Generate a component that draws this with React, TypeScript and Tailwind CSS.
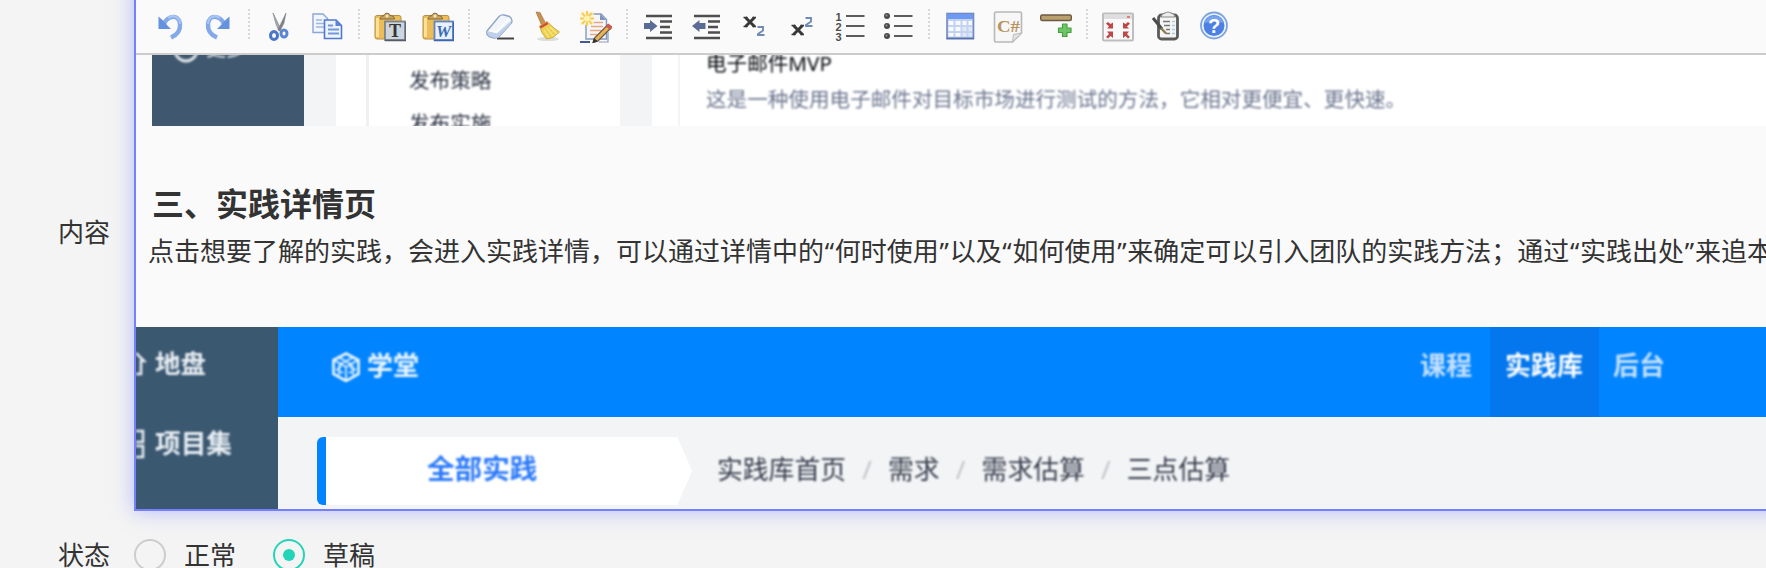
import React from 'react';

const Undo = () => (
  <>
    <path d="M10 13C14 4 25 3 26 13C26.500 19 23 24 17 26.500" fill="none" stroke="#84a9e8" strokeWidth="4.400" />
    <path d="M14 7C19 3 26 6 26 13" fill="none" stroke="#a9c6f5" strokeWidth="2" />
    <path d="M4.500 5.500V18H17L12.500 13.500L8.500 9Z" fill="#6592de" />
  </>
);

const Cut = () => (
  <>
    <path d="M9 2L17 18.500L15 20L12 13Z" fill="#a9adb3" stroke="#898d93" strokeWidth="0.800" />
    <path d="M22 2L14 18.500L16 20L20 12Z" fill="#7e8389" stroke="#777" strokeWidth="0.500" />
    <ellipse cx="10" cy="24.500" rx="3.500" ry="4" fill="none" stroke="#4a76c9" strokeWidth="3" />
    <ellipse cx="20" cy="22.500" rx="3" ry="3.500" fill="none" stroke="#5a86d6" strokeWidth="3" />
  </>
);

const Copy = () => (
  <>
    <path d="M1 3H11L15.500 7.500V21.500H1Z" fill="#f1f6ff" stroke="#8aa5d8" strokeWidth="1.400" />
    <path d="M4 9H10M4 12.500H12M4 16H12" stroke="#9db6e2" strokeWidth="1.500" />
    <path d="M12.500 9H24L29.500 14.500V27.500H12.500Z" fill="#edf4ff" stroke="#5078cc" strokeWidth="1.600" />
    <path d="M23.500 9V15H29.500Z" fill="#5d84d8" />
    <path d="M16 14.500H21M16 18.500H27M16 22.500H27" stroke="#7698da" strokeWidth="1.800" />
  </>
);

const Board = () => (
  <>
    <rect x="1" y="4.500" width="26" height="23.500" rx="2" fill="#edbd58" stroke="#b98e45" />
    <path d="M3.500 7V26" stroke="#ffe19a" strokeWidth="3" />
    <path d="M6 8C6 5 9 5 10 4.500C10 1.500 16 1.500 16 4.500C18 5 20.500 5 20.500 8Z" fill="#c9a65e" stroke="#806a42" />
    <circle cx="13" cy="5" r="1.500" fill="#f5e7c2" />
  </>
);

const PasteText = () => (
  <>
    <Board />
    <rect x="11" y="10.500" width="20" height="18.500" fill="#cdd5df" stroke="#7b838e" strokeWidth="1.800" />
    <path d="M11 29.500H32V11" fill="none" stroke="#565c65" strokeWidth="1.500" />
    <text x="21" y="26" textAnchor="middle" fontFamily="Liberation Serif" fontWeight="bold" fontSize="18" fill="#353535">T</text>
  </>
);

const PasteWord = () => (
  <>
    <Board />
    <rect x="12.500" y="10.500" width="18.500" height="18.500" fill="#e8f1fc" stroke="#5f86c7" strokeWidth="1.800" />
    <path d="M12 29.500H31.500V11" fill="none" stroke="#3d67ae" strokeWidth="1.500" />
    <text x="21.500" y="25.500" textAnchor="middle" fontFamily="Liberation Serif" fontWeight="bold" fontStyle="italic" fontSize="17" fill="#3c6cb8">W</text>
  </>
);

const Eraser = () => (
  <>
    <path d="M13 27.500H30" stroke="#444" strokeWidth="2" />
    <path d="M3 20L15 5.500Q17 3.500 20 4L25.500 5.500Q29 8 27.500 12L15 25.500Q13 27.500 10 27L5 25.500Q2 23.500 3 20Z" fill="#f1f5fb" stroke="#8fa4c6" strokeWidth="1.400" />
    <path d="M3.500 20L13 22.500L27.500 9.500L27 13L14.500 26Q12 27.500 9 26.500L5 25Q3 23 3.500 20Z" fill="#bed0ea" />
    <path d="M5 19.500L12.500 21L25 8" fill="none" stroke="#fff" strokeWidth="1.500" />
  </>
);

const Broom = () => (
  <>
    <ellipse cx="16" cy="28" rx="11" ry="2" fill="#ddd" />
    <path d="M4 1L8 1.500L13.500 12L9.500 14Z" fill="#c79150" stroke="#9d6a35" strokeWidth="0.600" />
    <path d="M7.500 15L15 10.500L22 17L27.500 21L21 26.500L14.500 28Q9 22 7.500 15Z" fill="#ecd04f" stroke="#c6a536" strokeWidth="0.800" />
    <path d="M7.500 15.500L15 11L16.500 13L9 17.500Z" fill="#cf4e3e" />
    <path d="M12 19L17 26.500M15 17L21 25M18 16L24.500 22.500" stroke="#f8e88b" strokeWidth="1.200" />
  </>
);

const Template = () => (
  <>
    <path d="M9 3H21L26.500 8.500V28H6V14Z" fill="#f4f6fa" stroke="#8599bc" strokeWidth="1.400" />
    <path d="M20 3V9H26Z" fill="#7d95c1" />
    <path d="M13 11.500H23M11 15.500H23M10 19.500H21M10 23.500H17" stroke="#e6a77f" strokeWidth="1.500" />
    <path d="M0 0H14V14H0Z" fill="#fdf3cf" opacity="0.700" />
    <path d="M7 0V15M0 7.500H14M2 2L12 13M12 2L2 13" stroke="#f5cc55" strokeWidth="2" />
    <circle cx="7" cy="7.500" r="3" fill="#fff2ad" />
    <path d="M27.500 14L31 17L18 30L13 31.500L14.500 27Z" fill="#e4b257" stroke="#695541" strokeWidth="1.200" />
    <path d="M27 14L31.500 17.500" stroke="#cf5953" strokeWidth="4" />
    <path d="M14 27L18 30.500L12.500 32Z" fill="#333" />
    <path d="M0 31H10" stroke="#405b91" strokeWidth="2" />
    <path d="M28 21V31H19" fill="none" stroke="#8599bc" strokeWidth="1.200" />
  </>
);

const IndentLines = () => (
  <path d="M4 5H30M18 10.500H30M18 16H28M18 21.500H30M4 27H30" stroke="#4e4e4e" strokeWidth="2.600" />
);

const Indent = () => (
  <>
    <IndentLines />
    <path d="M2 12H8V9L15.500 15L8 21V18H2Z" fill="#5a6c96" />
  </>
);

const Outdent = () => (
  <>
    <IndentLines />
    <path d="M15.500 12H9.500V9L2 15L9.500 21V18H15.500Z" fill="#5a6c96" />
  </>
);

const Sub = () => (
  <>
    <path d="M7.500 6.500L16.500 15.500M16.500 6.500L7.500 15.500" stroke="#383838" strokeWidth="3" />
    <path d="M5.500 6.500H9.500M14.500 6.500H18M5.500 15.500H9.500M14.500 15.500H18" stroke="#383838" strokeWidth="1.500" />
    <path d="M19.500 16H25V19.500L20 23V24H26.500" fill="none" stroke="#718bb8" strokeWidth="1.900" />
  </>
);

const Sup = () => (
  <>
    <path d="M7.500 14.500L16.500 23.500M16.500 14.500L7.500 23.500" stroke="#383838" strokeWidth="3" />
    <path d="M5.500 14.500H9.500M14.500 14.500H18M5.500 23.500H9.500M14.500 23.500H18" stroke="#383838" strokeWidth="1.500" />
    <path d="M19.500 7H25V10.500L20 14V15H26.500" fill="none" stroke="#718bb8" strokeWidth="1.900" />
  </>
);

const OrderedList = () => (
  <>
    <path d="M12 5H30.500M12 15H30.500M12 25H30.500" stroke="#5c5c5c" strokeWidth="2.200" />
    <g fontFamily="Liberation Sans" fontWeight="bold" fontSize="11" fill="#4c4c4c">
      <text x="1.500" y="10">1</text>
      <text x="1.500" y="20">2</text>
      <text x="1.500" y="30">3</text>
    </g>
  </>
);

const BulletList = () => (
  <>
    <path d="M12 5H30.500M12 15H30.500M12 25H30.500" stroke="#5c5c5c" strokeWidth="2.200" />
    {[5, 15, 25].map((y) => (
      <g key={y}>
        <circle cx="5" cy={y} r="3" fill="#4a4a4a" />
        <circle cx="4.500" cy={y - 0.5} r="1" fill="#999" />
      </g>
    ))}
  </>
);

const Table = () => (
  <>
    <rect x="3" y="2.500" width="26.500" height="25" fill="#c3d2ef" stroke="#7189c2" strokeWidth="1.600" />
    <path d="M3 3H29V8H3Z" fill="#6f9af3" />
    <g fill="#f7faff">
      <path d="M4.500 10H9.500V14H4.500ZM11.500 10H16.500V14H11.500ZM18.500 10H22.500V14H18.500ZM24.500 10H28V14H24.500Z" />
      <path d="M4.500 16H9.500V20H4.500ZM11.500 16H16.500V20H11.500Z" />
      <path d="M4.500 22H9.500V25.500H4.500ZM11.500 22H16.500V25.500H11.500Z" />
    </g>
    <path d="M18.500 16H22.500V20H18.500ZM24.500 16H28V20H24.500ZM18.500 22H22.500V25.500H18.500ZM24.500 22H28V25.500H24.500Z" fill="#dfe8fa" />
    <path d="M2.500 27.500H30" stroke="#5671ae" strokeWidth="1.600" />
  </>
);

const Code = () => (
  <>
    <path d="M4 1H28Q29.500 1 29.500 3V22L20.500 31H4Q2.500 31 2.500 29V3Q2.500 1 4 1Z" fill="#f7f7f7" stroke="#b8b8b8" strokeWidth="1.600" />
    <path d="M20.500 31L21.500 23.500L29.500 22Z" fill="#e4e4e4" stroke="#bbb" />
    <text x="5" y="21" textLength="23" lengthAdjust="spacingAndGlyphs" fontFamily="Liberation Serif" fontWeight="bold" fontSize="17" fill="#b8935d">C#</text>
  </>
);

const Rule = () => (
  <>
    <rect x="0.700" y="4" width="30.600" height="5.500" rx="1.500" fill="#baa06c" stroke="#6b5a43" strokeWidth="1.400" />
    <path d="M22.500 13H27V17H31V21.500H27V25.500H22.500V21.500H18.500V17H22.500Z" fill="#6cc665" stroke="#45a23f" strokeWidth="1.200" strokeLinejoin="round" />
  </>
);

const Fullscreen = () => (
  <>
    <rect x="1" y="2.500" width="30" height="27" rx="1" fill="#fafafa" stroke="#bebebe" strokeWidth="2" />
    <path d="M2 4H30V8H2Z" fill="#dedede" />
    <path d="M25 6H28" stroke="#df8080" strokeWidth="2" />
    <g fill="#c04747">
      <path d="M4 12.500L6 11L8.500 13L11 11.500V17.500H5L7 15.500Z" />
      <path d="M28 12.500L26 11L23.500 13L21 11.500V17.500H27L25 15.500Z" />
      <path d="M4 26L6 27.500L8.500 25L11 27V20.500H5L7 23Z" />
      <path d="M28 26L26 27.500L23.500 25L21 27V20.500H27L25 23Z" />
    </g>
  </>
);

const Clipboard = () => (
  <>
    <rect x="8.500" y="4" width="19" height="24" rx="3" fill="#f5f5f3" stroke="#5b5b5b" strokeWidth="2.800" />
    <path d="M11 6Q11 3 14 2.500Q18 -0.500 22 2.500Q25 3 25 6Z" fill="#ececec" stroke="#888" strokeWidth="1.200" />
    <path d="M13 10.500H20M14 14.500H20M16 18.500H20M16 22.500H20" stroke="#777" strokeWidth="1.500" />
    <path d="M22 10.500H25M22 14.500H25M22 18.500H25M22 22.500H25" stroke="#a8cde5" strokeWidth="1.500" />
    <path d="M3 7L12 18" fill="none" stroke="#4b4b4b" strokeWidth="3" />
    <path d="M11 17L16 22.500" stroke="#8c7c50" strokeWidth="2.400" />
  </>
);

const Help = () => (
  <>
    <circle cx="16" cy="14.500" r="13" fill="#eef4ff" stroke="#7fa5de" strokeWidth="1.800" />
    <circle cx="16" cy="14.500" r="10.500" fill="#4c80e4" />
    <path d="M6 12A10.500 10.500 0 0 1 26 12Q16 9 6 12Z" fill="#77a2f0" />
    <text x="16" y="21.500" textAnchor="middle" fontFamily="Liberation Sans" fontWeight="bold" fontSize="20" fill="#fff">?</text>
  </>
);

const Redo = () => (
  <g transform="matrix(-1 0 0 1 32 0)">
    <Undo />
  </g>
);

const groups: React.FC[][] = [
  [Undo, Redo],
  [Cut, Copy],
  [PasteText, PasteWord],
  [Eraser, Broom, Template],
  [Indent, Outdent, Sub, Sup, OrderedList, BulletList],
  [Table, Code, Rule],
  [Fullscreen, Clipboard, Help],
];

const Toolbar = () => (
  <div className="h-[75px] shrink-0 border-b-2 border-[#cccccc] bg-[#fafafa] pt-[31px] pl-2.5 flex items-start">
    {groups.map((icons, i) => (
      <div key={i} className="flex items-start">
        {i > 0 && (
          <div className="-mt-0.5 mx-1.5 h-8 w-0.5 bg-[repeating-linear-gradient(to_bottom,#d9d9d9_0_2px,transparent_2px_4px)]" />
        )}
        {icons.map((Icon, j) => (
          <button key={j} type="button" className="w-12 h-8 flex justify-center">
            <svg width="32" height="32" viewBox="0 0 32 32">
              <Icon />
            </svg>
          </button>
        ))}
      </div>
    ))}
  </div>
);

const PracticeList = () => (
  <div className="ml-4 h-[71px] shrink-0 flex overflow-hidden bg-white text-[20.6px] leading-[44px]">
    <div className="w-[152px] bg-[#40586f] text-[#eef2f5] pl-[21px] flex gap-[7px]">
      <svg className="-mt-[18px] blur-[0.8px]" width="26" height="26" viewBox="0 0 26 26">
        <circle cx="13" cy="13" r="11" fill="none" stroke="#e8edf1" strokeWidth="2.800" />
      </svg>
      <span className="-mt-[26px] h-10 text-[20px] leading-[40px] blur-[0.8px]">更多</span>
    </div>
    <div className="w-8 bg-[#f3f4f6]" />
    <div className="w-[30px] bg-white" />
    <div className="w-[3px] bg-[#f0f0f1]" />
    <div className="w-[251px] pl-10 pt-[3px] text-[#2c3343] blur-[0.8px]">
      <div>发布策略</div>
      <div className="-mt-px">发布实施</div>
    </div>
    <div className="w-8 bg-[#f3f4f6]" />
    <div className="w-[26px]" />
    <div className="w-0.5 bg-[#f4f4f5]" />
    <div className="flex-1 pl-[26px]">
      <div className="-mt-[14px] text-[#05070d] blur-[0.8px]">电子邮件MVP</div>
      <div className="-mt-2 text-[#6c768f] whitespace-nowrap blur-[0.8px]">
        这是一种使用电子邮件对目标市场进行测试的方法，它相对更便宜、更快速。
      </div>
    </div>
  </div>
);

const crumbs = ['实践库首页', '需求', '需求估算', '三点估算'];

const PracticeDetail = () => (
  <div className="h-[182px] shrink-0 flex overflow-hidden text-[26px] leading-[40px]">
    <div className="w-[142px] bg-[#3b5871] text-[#e9eff4] font-bold">
      <div className="mt-4 flex h-10">
        <svg className="blur-[0.8px]" width="19" height="40" viewBox="0 0 19 40">
          <path d="M0 10L8 18H5V31H0" fill="none" stroke="#e6ecf1" strokeWidth="2.600" />
        </svg>
        <span className="text-[25.500px] blur-[0.8px]">地盘</span>
      </div>
      <div className="mt-[41px] flex h-10">
        <svg className="blur-[0.8px]" width="19" height="40" viewBox="0 0 19 40">
          <path d="M0 7H7V18H0M0 22H7V33H0" fill="none" stroke="#e6ecf1" strokeWidth="2.600" />
        </svg>
        <span className="text-[25.700px] blur-[0.8px]">项目集</span>
      </div>
    </div>
    <div className="flex-1 bg-[#f3f4f6]">
      <div className="h-[90px] bg-[#0084ff] flex pt-[18px] font-bold text-[#eef6ff]">
        <svg className="ml-[53px] mt-[7px] mr-[6px] shrink-0 blur-[0.8px]" width="30" height="30" viewBox="0 0 30 30" fill="none" stroke="#f2f8ff" strokeWidth="2.600">
          <path d="M15 1.500L27.500 8V22L15 29L2.500 22V8Z" />
          <path d="M3 8L15 15L27 8M15 15V28M8 5.500L20 12V17M22 5.500L9 12V17M8 13.500V23M22 13.500V23M5 17L12 21M25 17L18 21" strokeWidth="1.600" />
        </svg>
        <span className="blur-[0.8px]">学堂</span>
        <div className="ml-[985px] -mt-[18px] h-[90px] flex shrink-0 text-[#c4e0ff]">
          <span className="w-[86px] pt-[18px] pl-[16px]"><span className="block blur-[0.8px]">课程</span></span>
          <span className="w-[109px] pt-[18px] pl-[15px] bg-[#0477ee] text-white"><span className="block blur-[0.8px]">实践库</span></span>
          <span className="pt-[18px] pl-[14px]"><span className="block blur-[0.8px]">后台</span></span>
        </div>
      </div>
      <div className="flex pt-5 pl-[39px]">
        <div className="h-[68px] w-[9px] rounded-l-md bg-[#0084ff]" />
        <div className="h-[68px] w-[366px] bg-white pl-[101px] pt-[11px] text-[27.600px] font-bold text-[#2c7afa] [clip-path:polygon(0_0,96%_0,100%_50%,96%_100%,0_100%)]">
          <div className="blur-[0.8px]">全部实践</div>
        </div>
        <div className="ml-[25px] pt-3 flex text-[25.800px] text-[#343a4a] blur-[0.8px]">
          {crumbs.map((crumb, i) => (
            <div key={crumb} className="flex">
              {i > 0 && <span className="w-[42px] text-center text-[#c2c4ca]">/</span>}
              <span>{crumb}</span>
            </div>
          ))}
        </div>
      </div>
    </div>
  </div>
);

const intro =
  '点击想要了解的实践，会进入实践详情，可以通过详情中的“何时使用”以及“如何使用”来确定可以引入团队的实践方法；通过“实践出处”来追本';

const Radio: React.FC<{ checked?: boolean; label: string }> = ({ checked, label }) => (
  <label className="flex w-[139px] items-center gap-[18px]">
    <span
      className={
        checked
          ? 'size-8 rounded-full border-2 border-[#24d4b8] flex items-center justify-center'
          : 'size-8 rounded-full border-2 border-[#cccccc]'
      }
    >
      {checked && <span className="size-3 rounded-full bg-[#24d4b8]" />}
    </span>
    <span>{label}</span>
  </label>
);

export default function App() {
  return (
    <div className="w-[1766px] h-[568px] overflow-hidden bg-[#f4f4f4] text-[#333333] text-[26px] leading-[40px] font-['Noto_Sans','Noto_Sans_CJK_SC',sans-serif]">
      <div className="-mt-5 h-[531px] flex">
        <div className="w-[134px] shrink-0 pl-[58px] pt-[232px]">内容</div>
        <div className="w-[1700px] shrink-0 flex flex-col overflow-hidden border-l-2 border-b-2 border-[#7580ff] bg-[#fafafa] shadow-[0_0_20px_rgba(117,128,255,0.5)]">
          <Toolbar />
          <PracticeList />
          <h2 className="mt-[54px] pl-4 text-[32px] leading-[48px] font-bold">三、实践详情页</h2>
          <p className="mt-[3px] mb-[56px] h-10 pl-3 whitespace-nowrap">
            {intro.split(/([“”])/).map((part, i) => (
              <span key={i} className={i % 2 ? 'inline-block w-[10.8px] text-center' : ''}>
                {part}
              </span>
            ))}
          </p>
          <PracticeDetail />
        </div>
      </div>
      <div className="flex items-center pt-6">
        <span className="w-[134px] pl-[58px]">状态</span>
        <Radio label="正常" />
        <Radio label="草稿" checked />
      </div>
    </div>
  );
}
